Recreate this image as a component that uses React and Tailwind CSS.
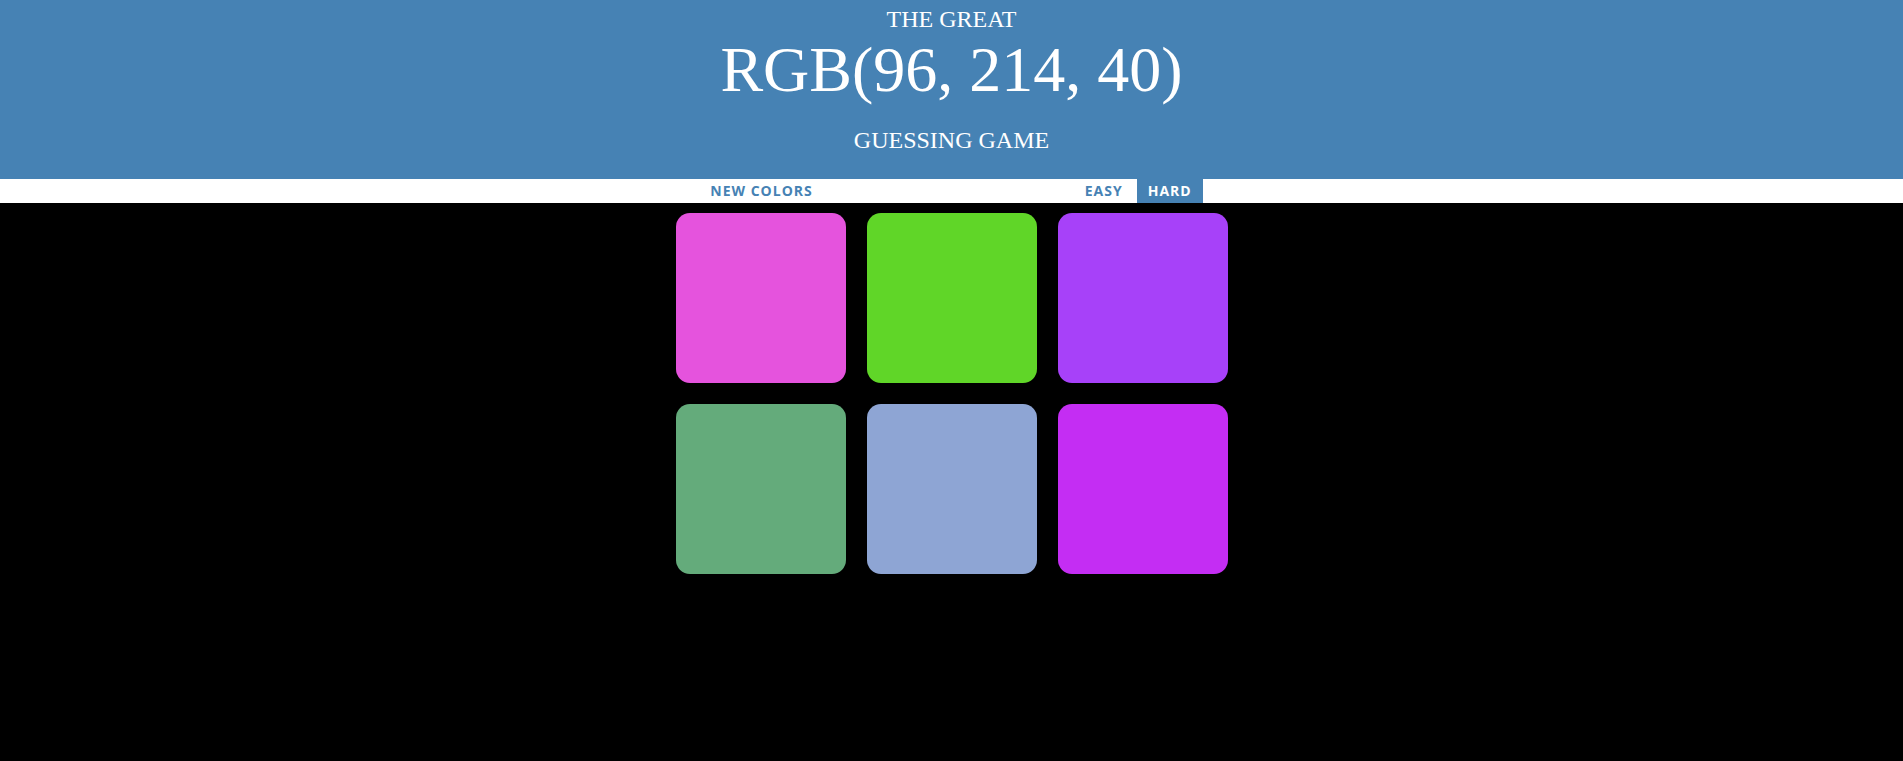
import React from "react";

const colors = ["#e553dd", "#60d628", "#a741f9", "#64ab7b", "#8ea5d4", "#c42df3"];

export default function App() {
  return (
    <div className="min-h-[761px] bg-black">
      <header
        className="bg-[#4682b4] text-white text-center uppercase pt-[4px] pb-[24px]"
        style={{ fontFamily: '"Liberation Serif", "Times New Roman", serif' }}
      >
        <div className="text-[24px] leading-[30px] h-[30px]">The Great</div>
        <div className="text-[64px] leading-[72px] h-[72px]">RGB(96, 214, 40)</div>
        <div className="text-[24px] leading-[30px] h-[30px] mt-[19px]">Guessing Game</div>
      </header>
      <div
        className="bg-white h-[24px] flex justify-center items-stretch font-bold uppercase text-[14px] tracking-[1px] text-[#4682b4]"
        style={{ fontFamily: '"Open Sans", "Liberation Sans", sans-serif' }}
      >
        <button className="px-[10px] leading-[24px] uppercase font-bold">New Colors</button>
        <span className="w-[252px]"></span>
        <button className="px-[10px] leading-[24px] uppercase font-bold">Easy</button>
        <span className="w-[4px]"></span>
        <button className="w-[66px] leading-[24px] uppercase font-bold bg-[#4682b4] text-white">Hard</button>
      </div>
      <div className="w-[552px] mx-auto mt-[10px] grid grid-cols-3 gap-[21px]">
        {colors.map((c, i) => (
          <div key={i} className="w-[170px] h-[170px] rounded-[14px]" style={{ backgroundColor: c }} />
        ))}
      </div>
    </div>
  );
}
